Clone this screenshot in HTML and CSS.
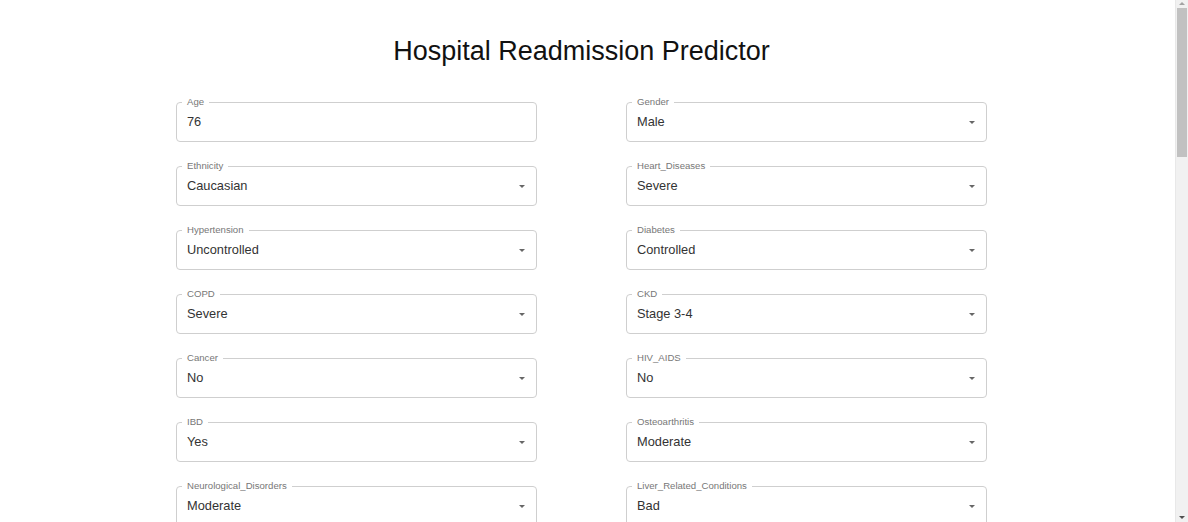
FILE: index.html
```html
<!DOCTYPE html>
<html lang="en">
<head>
<meta charset="utf-8">
<title>Hospital Readmission Predictor</title>
<link rel="stylesheet" href="styles.css">
</head>
<body>
<div class="page">
  <main class="container">
    <h1 class="title">Hospital Readmission Predictor</h1>
    <form class="grid">
      <div class="field"><span class="label">Age</span><div class="value">76</div></div>
      <div class="field select"><span class="label">Gender</span><div class="value">Male</div><span class="arrow"></span></div>

      <div class="field select"><span class="label">Ethnicity</span><div class="value">Caucasian</div><span class="arrow"></span></div>
      <div class="field select"><span class="label">Heart_Diseases</span><div class="value">Severe</div><span class="arrow"></span></div>

      <div class="field select"><span class="label">Hypertension</span><div class="value">Uncontrolled</div><span class="arrow"></span></div>
      <div class="field select"><span class="label">Diabetes</span><div class="value">Controlled</div><span class="arrow"></span></div>

      <div class="field select"><span class="label">COPD</span><div class="value">Severe</div><span class="arrow"></span></div>
      <div class="field select"><span class="label">CKD</span><div class="value">Stage 3-4</div><span class="arrow"></span></div>

      <div class="field select"><span class="label">Cancer</span><div class="value">No</div><span class="arrow"></span></div>
      <div class="field select"><span class="label">HIV_AIDS</span><div class="value">No</div><span class="arrow"></span></div>

      <div class="field select"><span class="label">IBD</span><div class="value">Yes</div><span class="arrow"></span></div>
      <div class="field select"><span class="label">Osteoarthritis</span><div class="value">Moderate</div><span class="arrow"></span></div>

      <div class="field select"><span class="label">Neurological_Disorders</span><div class="value">Moderate</div><span class="arrow"></span></div>
      <div class="field select"><span class="label">Liver_Related_Conditions</span><div class="value">Bad</div><span class="arrow"></span></div>

      <div class="field select"><span class="label">Mental_Health</span><div class="value">Stable</div><span class="arrow"></span></div>
      <div class="field select"><span class="label">Obesity</span><div class="value">Yes</div><span class="arrow"></span></div>

      <div class="field select"><span class="label">Smoking</span><div class="value">Former</div><span class="arrow"></span></div>
      <div class="field select"><span class="label">Alcohol_Use</span><div class="value">Moderate</div><span class="arrow"></span></div>

      <div class="field"><span class="label">Length_of_Stay</span><div class="value">7</div></div>
      <div class="field"><span class="label">Previous_Admissions</span><div class="value">3</div></div>

      <div class="field"><span class="label">Number_of_Medications</span><div class="value">12</div></div>
      <div class="field"><span class="label">ER_Visits</span><div class="value">2</div></div>

      <div class="field select"><span class="label">Discharge_Disposition</span><div class="value">Home</div><span class="arrow"></span></div>
      <div class="field select"><span class="label">Insurance</span><div class="value">Medicare</div><span class="arrow"></span></div>

      <div class="field select"><span class="label">Follow_Up</span><div class="value">Scheduled</div><span class="arrow"></span></div>
      <div class="field select"><span class="label">Living_Alone</span><div class="value">No</div><span class="arrow"></span></div>

      <div class="field select"><span class="label">Functional_Status</span><div class="value">Dependent</div><span class="arrow"></span></div>
      <div class="field select"><span class="label">Cognitive_Impairment</span><div class="value">Mild</div><span class="arrow"></span></div>

      <div class="field select"><span class="label">Polypharmacy</span><div class="value">Yes</div><span class="arrow"></span></div>
      <div class="field select"><span class="label">Nutrition</span><div class="value">Poor</div><span class="arrow"></span></div>

      <div class="field select"><span class="label">Frailty</span><div class="value">High</div><span class="arrow"></span></div>
      <div class="field select"><span class="label">Social_Support</span><div class="value">Limited</div><span class="arrow"></span></div>
    </form>
    <div class="actions"><button type="button" class="btn">Predict</button></div>
  </main>
</div>
<div class="scrollbar" aria-hidden="true">
  <span class="sb-up"></span>
  <span class="sb-thumb"></span>
  <span class="sb-down"></span>
</div>
</body>
</html>
```

FILE: styles.css
```css
* { box-sizing: border-box; }
html, body { margin: 0; padding: 0; background: #fff; }
body {
  font-family: "Liberation Sans", Arial, sans-serif;
  color: rgba(0, 0, 0, 0.87);
}
.page {
  padding-right: 25px;
  padding-bottom: 300px;
}
.container {
  width: 811px;
  margin: 0 auto;
  padding-top: 35px;
}
.title {
  margin: 0 0 35px;
  text-align: center;
  font-weight: 400;
  font-size: 27px;
  line-height: 32px;
  color: #111;
}
.grid {
  display: grid;
  grid-template-columns: 361px 361px;
  column-gap: 89px;
  row-gap: 24px;
}
.field {
  position: relative;
  height: 40px;
  border: 1px solid #cfcfcf;
  border-radius: 4px;
  display: flex;
  align-items: center;
  padding: 0 10px;
}
.label {
  position: absolute;
  left: 5px;
  top: -7px;
  padding: 0 5px;
  background: #fff;
  font-size: 9.6px;
  line-height: 11px;
  color: #777;
}
.value {
  font-size: 12.8px;
  color: #333;
  line-height: 16px;
}
.arrow {
  position: absolute;
  right: 11px;
  top: 18px;
  width: 0;
  height: 0;
  border-left: 3.5px solid transparent;
  border-right: 3.5px solid transparent;
  border-top: 3.5px solid #666;
}
.actions {
  display: flex;
  justify-content: center;
  margin-top: 32px;
}
.btn {
  font-family: inherit;
  font-size: 13px;
  text-transform: uppercase;
  background: #1976d2;
  color: #fff;
  border: 0;
  border-radius: 4px;
  padding: 8px 22px;
}
.scrollbar {
  position: fixed;
  top: 0;
  right: 0;
  width: 13px;
  height: 100%;
  background: #f1f1f1;
  border-left: 1px solid #e8e8e8;
}
.sb-thumb {
  position: absolute;
  left: 1px;
  right: 1px;
  top: 8px;
  height: 149px;
  background: #c1c1c1;
}
.sb-up, .sb-down {
  position: absolute;
  left: 3px;
  width: 0;
  height: 0;
  border-left: 3px solid transparent;
  border-right: 3px solid transparent;
}
.sb-up {
  top: 2px;
  border-bottom: 3px solid #a3a3a3;
}
.sb-down {
  bottom: 3px;
  border-top: 3px solid #505050;
}
```
